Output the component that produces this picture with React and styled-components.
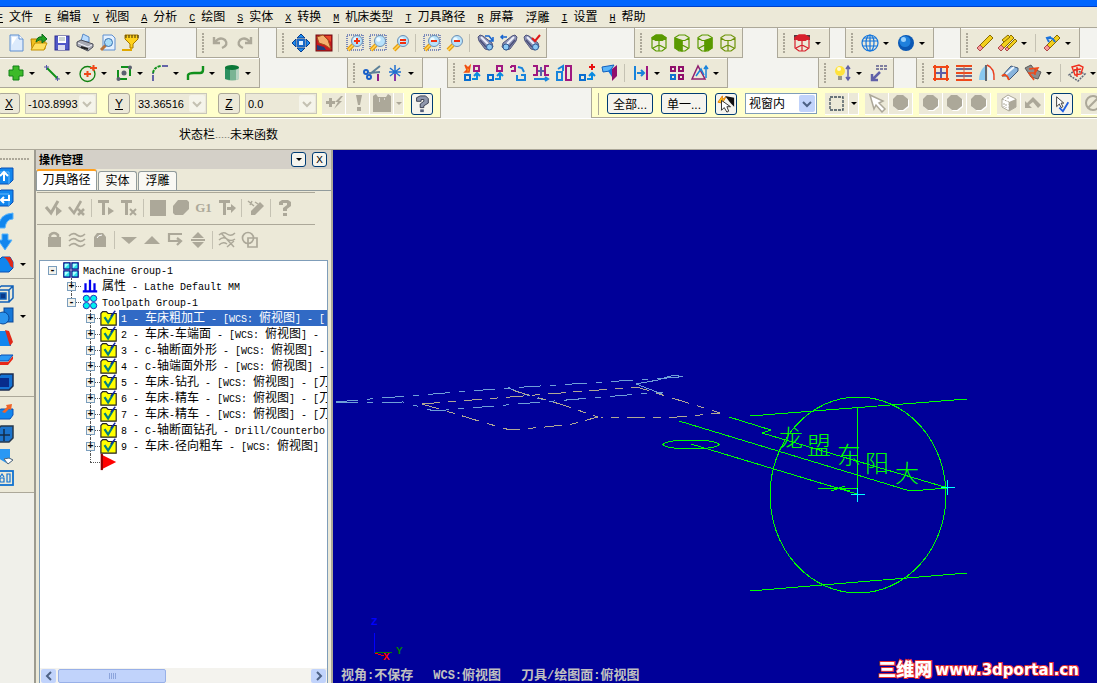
import styled, { createGlobalStyle, css } from "styled-components";

const GREY = "#aca899";

const cube = (color, face) => (
  <g fill="none" stroke={color} strokeWidth="1.2">
    {face && <path d={face} fill={color} />}
    <path d="M7 2H13L17 4.500V15L13 18H7L3 15V4.500zM3 5L7 7.500H13L17 5M10 7.500V18M4 15L10 12L16 15" />
  </g>
);

const lens = (inner, frame) => (
  <g>
    {frame && <rect x="2" y="2" width="16" height="15" fill="none" stroke="#0a2a9c" strokeDasharray="1 1" />}
    <path d="M8 12L3 17" stroke="#e8a012" strokeWidth="4" />
    <path d="M8 12L3 17" stroke="#ffd75a" strokeWidth="1.5" />
    <circle cx="12" cy="8" r="5.5" fill="#b8e2fb" stroke="#6c8fb4" />
    <circle cx="10.5" cy="6.5" r="2.2" fill="#eefaff" />
    <path d={inner} stroke="#f03010" strokeWidth="2" fill="none" />
  </g>
);

const spyglass = (extra) => (
  <g>
    <path d="M2 4L4 2L7 3L16 10L17 14L13 17L9 16L3 8z" fill="#8b91b5" stroke="#50557c" />
    <path d="M5 4L12 11" stroke="#eef0fb" strokeWidth="2" />
    <path d="M4 7L10 14" stroke="#4a4f78" strokeWidth="1.5" />
    <circle cx="13.5" cy="14" r="3" fill="#8cc8f4" stroke="#2e5a94" />
    {extra}
  </g>
);

const boxes = (extra) => (
  <g fill="none" strokeWidth="2">
    <rect x="3" y="12" width="5" height="5" stroke="#0a6ed0" />
    <path d="M10 16H15V11M12 13L15 10L18 13" stroke="#0a8ae0" />
    {extra}
  </g>
);

const polygonOff = (
  <g>
    <path d="M7 3H13L18 7V14L13 18H8L3 14V7z" fill="#fff" />
    <path d="M6 2H12L17 6V13L12 17H7L2 13V6z" fill={GREY} />
  </g>
);

const solid = (inner) => (
  <g>
    <path d="M2 6L6 2H18V14L14 18H2z" fill="#1186ee" stroke="#0a50b4" />
    <path d="M2 6H14V18" stroke="#64bafc" fill="none" />
    {inner}
  </g>
);

const eraser = (x = 0) => (
  <g transform={`translate(${x} 0)`}>
    <path d="M15 2L18 5L8 15L5 12z" fill="#f2cf1c" stroke="#8a6b00" />
    <path d="M5 12L8 15L5 18L2 15z" fill="#f59a9a" stroke="#b04848" />
  </g>
);

const icons = {
  fileNew: (
    <g>
      <path d="M4 2H13L17 6V18H4z" fill="#dceafc" stroke="#5f8fd0" />
      <path d="M13 2V6H17" fill="#fff" stroke="#5f8fd0" />
      <path d="M6 4H11L6 12z" fill="#fff" />
    </g>
  ),
  open: (
    <g>
      <path d="M2 6H8L10 8H16V16H3z" fill="#f0c020" stroke="#b88400" />
      <path d="M2 17L6 10H18L15 17z" fill="#ffe060" stroke="#c29000" />
      <path d="M7 9Q8 3 13 4V1L18 6L13 10V7Q10 6 7 9z" fill="#22a122" stroke="#0d6a1c" />
    </g>
  ),
  save: (
    <g>
      <rect x="3" y="3" width="14" height="14" fill="#5158c8" stroke="#2c2f90" />
      <rect x="6" y="3" width="8" height="7" fill="#fff" />
      <path d="M7 5H13M7 7H13" stroke="#9aa" />
      <rect x="6" y="12" width="7" height="5" fill="#dde" />
    </g>
  ),
  print: (
    <g>
      <path d="M6 8L8 1L14 4L14 9z" fill="#b9dcff" stroke="#5a88c4" />
      <path d="M2 9L6 7L18 11V14L13 18L2 13z" fill="#a9abb5" stroke="#4c4e5a" />
      <path d="M3 10L13 14L17 12" stroke="#f4f4fa" fill="none" />
      <path d="M6 14L13 16" stroke="#222" strokeWidth="2" />
    </g>
  ),
  preview: (
    <g>
      <path d="M5 2H14L17 5V17H5z" fill="#e4f0fd" stroke="#5f8fd0" />
      <path d="M8 12L3 17" stroke="#b8743c" strokeWidth="3" />
      <circle cx="10.5" cy="9.5" r="4" fill="#a8dcf8" stroke="#3870b0" />
    </g>
  ),
  funnel: (
    <g>
      <path d="M4 2H17V6L12 11V15H9V11L4 6z" fill="#ffd21c" stroke="#a67800" />
      <path d="M5 2V5M8 2V5M11 2V5M14 2V5M17 2V5" stroke="#3b2a00" />
      <path d="M10 15V17H1" stroke="#e0a800" strokeWidth="2" fill="none" />
    </g>
  ),
  undo: <path d="M3 4V10H9M4 9Q9 3 14 7Q18 12 11 15" stroke={GREY} strokeWidth="2.4" fill="none" />,
  redo: <path d="M17 4V10H11M16 9Q11 3 6 7Q2 12 9 15" stroke={GREY} strokeWidth="2.4" fill="none" />,
  fit: (
    <g fill="#1c8cf0" stroke="#0a3c8c">
      <path d="M10 1L14 5H6zM10 19L14 15H6zM1 10L5 6V14zM19 10L15 6V14z" />
      <rect x="7" y="7" width="6" height="6" fill="#dff1ff" stroke="#1668c8" strokeWidth="2" />
    </g>
  ),
  repaint: (
    <g>
      <rect x="2" y="2" width="16" height="16" fill="#c8181c" stroke="#701014" />
      <path d="M11 3H17V9z" fill="#e84828" />
      <path d="M3 12L10 14L12 17H3z" fill="#223a7c" />
      <path d="M3 4L9 2L14 7L17 16L11 12L5 10z" fill="#f4b070" stroke="#a0501c" />
    </g>
  ),
  zoomWindow: lens("M9 8H15M12 5V11", true),
  zoomTarget: lens("", true),
  zoomAll: lens("M9 7H15M9 10H15", false),
  zoomOutHalf: lens("M9 8H15", true),
  zoomOut: lens("M9 8H15", false),
  viewA: spyglass(<path d="M9 3H13L17 8M17 4V8H13" stroke="#1664d0" fill="none" strokeWidth="1.5" />),
  viewB: (
    <g>
      <path d="M18 4L16 2L13 3L4 10L3 14L7 17L11 16L17 8z" fill="#8b91b5" stroke="#50557c" />
      <path d="M15 4L8 11" stroke="#eef0fb" strokeWidth="2" />
      <path d="M16 7L10 14" stroke="#4a4f78" strokeWidth="1.5" />
      <circle cx="7" cy="14" r="3" fill="#8cc8f4" stroke="#2e5a94" />
      <path d="M2 4H8M4 2L2 4L4 6" stroke="#1664d0" fill="none" strokeWidth="1.5" />
    </g>
  ),
  viewC: spyglass(<path d="M10 5L13 8L18 2" stroke="#e01818" fill="none" strokeWidth="2" />),
  cubeTop: cube("#5a9a00", "M3 5L7 2H13L17 5L13 7.500H7z"),
  cubeFront: cube("#5a9a00", "M3 5L10 7.500V18L3 15z"),
  cubeSide: cube("#5a9a00", "M17 5L10 7.500V18L17 15z"),
  cubeIso: cube("#6d9308"),
  cubeRed: (
    <g>
      <rect x="2" y="2" width="16" height="5" fill="#4a4044" />
      {cube("#d8202c", "M3 5L7 2H13L17 5L13 7.500H7z")}
    </g>
  ),
  globe: (
    <g fill="none" stroke="#1274dc" strokeWidth="1.2">
      <circle cx="10" cy="10" r="8" />
      <ellipse cx="10" cy="10" rx="4" ry="8" />
      <path d="M2 8H18M3 13H17M10 2V18M4 5H16" />
    </g>
  ),
  sphere: (
    <g>
      <circle cx="10" cy="10" r="8" fill="#0b58b4" />
      <circle cx="9" cy="8.5" r="5.5" fill="#1f80dc" />
      <circle cx="7.5" cy="6.5" r="2.5" fill="#9bd2fc" />
    </g>
  ),
  eraser: eraser(),
  eraserMulti: (
    <g>
      {eraser(-2)}
      <path d="M17 6L19 8L11 16L9 14zM10 2L12 4L6 9L4 7z" fill="#f2cf1c" stroke="#8a6b00" />
      <path d="M9 14L11 16L9 18L7 16z" fill="#f59a9a" stroke="#b04848" />
    </g>
  ),
  unerase: (
    <g>
      {eraser()}
      <path d="M5 6Q10 3 13 9M7 9L5 5L9 4" stroke="#1c74dc" strokeWidth="2" fill="none" />
    </g>
  ),
  plus: <path d="M7 3H13V7H17V13H13V17H7V13H3V7H7z" fill="#3cba28" stroke="#128018" />,
  line: (
    <g stroke="#5858a8">
      <path d="M5 5L16 16" stroke="#109018" strokeWidth="2" />
      <path d="M2 4H7M4.500 2V7M13 16H18M15.500 13V18" />
    </g>
  ),
  circle: (
    <g fill="none">
      <circle cx="9.500" cy="11" r="7.500" stroke="#108010" strokeWidth="1.300" />
      <path d="M6 11H13M9.500 8V14M12 5H19M15.500 2V8" stroke="#f04818" strokeWidth="2" />
    </g>
  ),
  rect: (
    <g>
      <path d="M7 4H16V13M13 16H4V7" stroke="#10901c" strokeWidth="2" fill="none" />
      <circle cx="10" cy="10" r="2.500" fill="#5c6070" />
      <circle cx="4.500" cy="16" r="2" fill="#5c6070" />
      <circle cx="16" cy="4.500" r="2" fill="#5c6070" />
    </g>
  ),
  fillet: (
    <g fill="none" strokeWidth="2">
      <path d="M3 18V10M12 3H18" stroke="#6464a8" strokeDasharray="6 1" />
      <path d="M3 10Q4 4 11 3" stroke="#10901c" strokeDasharray="3 1" />
    </g>
  ),
  spline: <path d="M2 17V12Q3 10 8 10H14Q17 10 17 7V3" stroke="#10901c" strokeWidth="2.400" fill="none" />,
  cylinder: (
    <g>
      <path d="M3 4V16Q10 19 17 16V4z" fill="#7ab494" />
      <path d="M3 4H8V17L3 16z" fill="#2c9060" />
      <path d="M14 5V17L17 16V5z" fill="#b9d4c4" />
      <ellipse cx="10" cy="4.500" rx="7" ry="2.500" fill="#0c7838" />
    </g>
  ),
  trim: (
    <g fill="none" strokeWidth="2">
      <path d="M18 3L8 11M18 9L7 10" stroke="#5c8098" />
      <circle cx="4" cy="9" r="2" stroke="#1860c8" />
      <circle cx="7" cy="14" r="2" stroke="#1860c8" />
      <path d="M16 11V18" stroke="#902088" />
    </g>
  ),
  breakPoint: (
    <g strokeWidth="1.500">
      <path d="M10 2V11M5 5L15 13M15 5L5 13M4 9H16" stroke="#2070d0" />
      <path d="M10 11V18" stroke="#8838a8" strokeWidth="2" />
    </g>
  ),
  move: boxes(
    <g>
      <path d="M12 3H17V8H12z" stroke="#a01880" />
      <path d="M3 2L6 5L8 3L7 9H3L5 7z" fill="#ffb020" stroke="#f05010" strokeWidth="1.500" />
    </g>
  ),
  move3d: boxes(<path d="M12 3H17V8H12z" stroke="#a01880" />),
  mirrorBox: (
    <g fill="none" strokeWidth="2">
      <path d="M3 3H7V8H3M3 3V5" stroke="#a01880" />
      <path d="M10 4L14 5L16 9M9 12V17H17V12H13" stroke="#1884dc" />
    </g>
  ),
  mirror: (
    <g fill="none" strokeWidth="2">
      <path d="M2 3H6V12H2M18 3H14V12H18" stroke="#a01880" />
      <path d="M10 4V13M7 8H13" stroke="#5c60a8" />
      <path d="M3 16H17M14 14L17 16L14 18" stroke="#1884dc" />
    </g>
  ),
  scale: (
    <g fill="none" strokeWidth="2">
      <path d="M3 9H8V17H3zM4 6L9 3V8" stroke="#1884dc" />
      <path d="M12 3H17V17H12z" stroke="#a01880" />
    </g>
  ),
  offset: boxes(<path d="M12 4H18M15 1V7" stroke="#e81010" />),
  project: (
    <g>
      <path d="M2 4L14 2L10 8L3 9z" fill="#5ab4f8" stroke="#1060c0" />
      <path d="M8 8L12 5V14z" fill="#1874d8" />
      <path d="M12 6L17 2V13L12 18z" fill="#90106c" />
    </g>
  ),
  stretch: (
    <g fill="none" strokeWidth="2">
      <path d="M4 3V17" stroke="#1884dc" />
      <path d="M16 3V17" stroke="#a01880" />
      <path d="M6 10H13M10 7L13 10L10 13" stroke="#1884dc" />
    </g>
  ),
  array: (
    <g fill="none" strokeWidth="2" stroke="#90106c">
      <path d="M4 4H8V8H4zM12 4H16V8H12zM12 12H16V16H12z" />
      <path d="M4 12H8V16H4z" stroke="#1070d0" />
    </g>
  ),
  drag: (
    <g fill="none" strokeWidth="1.500">
      <path d="M2 16L8 3L15 16z" stroke="#902070" />
      <path d="M6 13L11 6L14 12M16 15V4M14 6L16 3L18 6" stroke="#1884dc" />
    </g>
  ),
  bulb: (
    <g>
      <circle cx="7" cy="8" r="5" fill="#ffe23c" />
      <circle cx="6" cy="6" r="2" fill="#fffbd0" />
      <path d="M5 13H9V17H5z" fill="#98978a" />
      <path d="M15 4V16M13 6L15 3L17 6M13 14L15 17L17 14" stroke="#6060a8" strokeWidth="1.500" fill="none" />
    </g>
  ),
  note: (
    <g fill="none" stroke="#5c5c8c">
      <path d="M7 3H18M7 6H18" strokeDasharray="3 1" strokeWidth="1.500" />
      <path d="M11 9L4 16M3 11V17H9" stroke="#6060a8" strokeWidth="2.500" />
    </g>
  ),
  gridRed: (
    <g fill="none" strokeWidth="2">
      <path d="M2 4H18M2 16H18M4 2V18M16 2V18" stroke="#f04818" />
      <path d="M10 5V15M5 10H15" stroke="#5c60a8" />
    </g>
  ),
  lines: (
    <g strokeWidth="2">
      <path d="M2 3H18M2 10H18M2 17H18" stroke="#f04818" />
      <path d="M2 6H18M2 13H18" stroke="#6a6e94" />
      <path d="M10 3V17" stroke="#c86048" strokeWidth="1" />
    </g>
  ),
  revolve: (
    <g>
      <path d="M8 3Q2 8 2 17H8z" fill="#88c8f0" />
      <path d="M9 2V18" stroke="#303c50" strokeWidth="1.500" />
      <path d="M11 3Q18 6 17 17H11z" fill="#e4f2fa" />
      <path d="M10 2Q18 5 17 17" fill="none" stroke="#e84020" strokeWidth="1.500" />
    </g>
  ),
  sweep: (
    <g>
      <path d="M2 13L11 3L18 5V8L9 17L7 13z" fill="#88b4dc" stroke="#405878" />
      <path d="M2 13Q6 9 9 17" stroke="#f04818" strokeWidth="2" fill="none" />
      <path d="M6 11L14 4" stroke="#eef7ff" strokeWidth="2" />
    </g>
  ),
  net: (
    <g fill="none">
      <path d="M2 5L8 2L11 6L18 9L15 16L8 14z" fill="#8c8c8c" stroke="#5a5a5a" />
      <path d="M6 6L15 5L12 10L6 10L11 17M12 5V12" stroke="#f04818" strokeWidth="1.500" />
    </g>
  ),
  patch: (
    <g fill="none">
      <path d="M2 12L8 7L18 11L11 18z" stroke="#606878" strokeDasharray="2 1" strokeWidth="1.500" />
      <path d="M5 4L12 2L16 4L14 11L8 12zM7 7L14 6M10 4V14" stroke="#f02c1c" strokeWidth="1.400" />
    </g>
  ),
  fastPoint: <path d="M2 8H5V5H8V8H11V11H8V14H5V11H2zM17 3L11 9H14L10 16L18 8H15L19 3z" fill={GREY} />,
  bang: (
    <g>
      <path d="M8 2H14L12 12H10z" fill={GREY} />
      <rect x="9" y="14" width="4" height="4" fill={GREY} />
    </g>
  ),
  block: (
    <g>
      <path d="M1 3L4 1L6 4H14L16 1L19 3V19H1z" fill={GREY} />
      <path d="M7 6H8M12 6H13M7 8H8" stroke="#fff" />
    </g>
  ),
  help: (
    <g>
      <path d="M4 7V3L8 1H14L17 4V9L12 12V14H8V10L12 7V5H9V7z" fill="#8f97ac" stroke="#30374a" />
      <rect x="8" y="16" width="4" height="3" fill="#55607c" />
    </g>
  ),
  cursorFlash: (
    <g>
      <path d="M1 8L6 1L6 5L10 2L6 9z" fill="#ffc41c" stroke="#e07a00" />
      <path d="M9 1L19 3V13L15 9z" fill="#111" />
      <path d="M5 6V17L8 14L11 19L13 18L11 13H15z" fill="#fff" stroke="#222" />
    </g>
  ),
  marquee: <rect x="3" y="4" width="13" height="13" fill="none" stroke="#3c4c58" strokeWidth="1.300" strokeDasharray="3 1" />,
  cursorOff: <path d="M3 2L16 8L12 10L18 16L15 19L9 12L7 16z" fill="#fff" stroke={GREY} strokeWidth="1.500" />,
  polyOff: polygonOff,
  cubeOff: (
    <g>
      <path d="M3 6L9 2L17 6V14L10 18L3 14z" fill="#fff" stroke={GREY} />
      <path d="M10 9L17 6V14L10 18z" fill={GREY} />
      <path d="M3 6L10 9V18M5 10V14M7 11V15M9 4V6" stroke={GREY} fill="none" strokeDasharray="2 1" />
    </g>
  ),
  back: <path d="M2 15V8L4 10L10 4L18 12L15 15L10 9L6 12L9 15z" fill={GREY} />,
  cursorCheck: (
    <g fill="none">
      <path d="M4 2V13L7 10L9 14L11 13L9 9H12z" fill="#fff" stroke="#333" />
      <path d="M7 14L11 18L17 8" stroke="#2060e0" strokeWidth="2" />
    </g>
  ),
  forbid: (
    <g stroke={GREY} strokeWidth="2" fill="none">
      <circle cx="10" cy="10" r="7" />
      <path d="M5 15L15 5" />
    </g>
  ),
  selectAllOps: (
    <g>
      <path d="M2 9L7 15L14 3" stroke={GREY} strokeWidth="3" fill="none" />
      <path d="M12 8L18 13L12 18z" fill={GREY} />
    </g>
  ),
  deselectOps: <path d="M2 9L7 15L14 3M11 11L17 17M17 11L11 17" stroke={GREY} strokeWidth="2.500" fill="none" />,
  regenOps: (
    <g fill={GREY}>
      <path d="M2 2H13V5H9V17H6V5H2z" />
      <path d="M12 9L18 13L12 17z" />
    </g>
  ),
  regenDirty: (
    <g fill={GREY}>
      <path d="M2 2H13V5H9V17H6V5H2z" />
      <path d="M11 11L17 17M17 11L11 17" stroke={GREY} strokeWidth="2" />
    </g>
  ),
  square: <path d="M2 2H18V18H2z" fill={GREY} />,
  verify: <path d="M7 2H16L18 4V11L12 17H4L2 15V8z" fill={GREY} />,
  highfeed: (
    <g fill={GREY}>
      <path d="M2 2H13V5H9V17H6V5H2zM10 9H14V6L19 10L14 15V12H10z" />
    </g>
  ),
  tag: (
    <g fill={GREY}>
      <path d="M14 4L18 8L9 17H5V13z" />
      <path d="M2 3L8 8M6 3L4 7M9 4L12 6" stroke={GREY} strokeWidth="1.500" />
    </g>
  ),
  helpOff: (
    <g fill={GREY}>
      <path d="M4 7V4L7 2H13L16 4V8L12 11V13H8V10L12 7V5H8V7z" />
      <rect x="8" y="15" width="4" height="3" />
    </g>
  ),
  lock: (
    <g>
      <path d="M6 9V5Q10 1 14 5V9" stroke={GREY} strokeWidth="2.500" fill="none" />
      <rect x="4" y="7" width="13" height="10" fill={GREY} />
    </g>
  ),
  waves: <path d="M2 6Q6 2 10 5T18 4M2 11Q6 7 10 10T18 9M2 16Q6 12 10 15T18 14" stroke={GREY} strokeWidth="1.700" fill="none" />,
  lockAlt: (
    <g>
      <path d="M4 17V7L7 3H13L16 7V17z" fill={GREY} />
      <path d="M7 8Q8 5 12 5" stroke="#fff" fill="none" />
    </g>
  ),
  down: <path d="M2 7H18L10 14z" fill={GREY} />,
  up: <path d="M2 14H18L10 6z" fill={GREY} />,
  insert: <path d="M17 4H4V11H15M12 8L16 11L12 15" stroke={GREY} strokeWidth="2.200" fill="none" />,
  scroll: <path d="M10 2L16 8H4zM3 9H17V11H3zM10 18L16 12H4z" fill={GREY} />,
  wavesX: <path d="M2 5Q6 1 10 4T18 3M2 10Q6 6 10 9T18 9M2 15Q6 11 10 14M4 3L17 17M17 11L10 17" stroke={GREY} strokeWidth="1.500" fill="none" />,
  overlap: (
    <g stroke={GREY} strokeWidth="1.700" fill="none">
      <circle cx="8" cy="8" r="5.500" />
      <path d="M8 8H17V17H8z" />
    </g>
  ),
  extrude: solid(<path d="M9 15V7M5 10L9 6L13 10" stroke="#fff" strokeWidth="2" fill="none" />),
  revolveSolid: solid(<path d="M14 7V12H6M9 9L6 12L9 15" stroke="#fff" strokeWidth="2" fill="none" />),
  sweepSolid: <path d="M18 3V9Q11 9 10 18H4Q3 4 18 3z" fill="#1186ee" stroke="#58b4fc" />,
  loft: <path d="M7 2H13V8H17L10 18L3 8H7z" fill="#1186ee" stroke="#58b4fc" />,
  filletSolid: (
    <g>
      <path d="M2 8L7 3H15L18 8V14L14 18H2z" fill="#1186ee" stroke="#0a50b4" />
      <path d="M9 3H15L18 8V14L15 12Q14 7 9 3z" fill="#e02818" />
    </g>
  ),
  shell: (
    <g fill="none" stroke="#1060b8" strokeWidth="1.500">
      <path d="M2 6H14V18H2zM6 2H18V14L14 18M14 6L18 2M2 6L6 2" />
      <rect x="5" y="9" width="6" height="6" fill="#0a3888" />
    </g>
  ),
  boolean: (
    <g fill="#1678d8" stroke="#0a4898">
      <rect x="9" y="2" width="9" height="14" />
      <circle cx="8" cy="12" r="6" fill="#2a94ee" />
    </g>
  ),
  trimSolid: (
    <g>
      <path d="M3 3H11L16 14V18H2z" fill="#1186ee" />
      <path d="M10 2L14 3L18 14L15 18z" fill="#e02818" />
    </g>
  ),
  draft: (
    <g>
      <path d="M6 5H18L13 11H1z" fill="#2a98f4" stroke="#0a50b4" />
      <path d="M1 12H13L18 6V9L13 15H1z" fill="#e82818" />
    </g>
  ),
  thicken: (
    <g>
      <path d="M2 6L6 2H18V14L14 18H2z" fill="#1472d4" stroke="#1c2c50" strokeWidth="1.500" />
      <rect x="4" y="6" width="10" height="9" fill="#082c8c" />
    </g>
  ),
  removeFace: (
    <g>
      <path d="M2 9L6 7H18V13L15 17H2z" fill="#1186ee" stroke="#0a50b4" />
      <path d="M7 10L12 5L11 3L17 2L16 8L14 7L10 11z" fill="#f06428" />
    </g>
  ),
  feature: (
    <g>
      <path d="M2 6L6 2H18V14L14 18H2z" fill="#1c74cc" stroke="#26384c" strokeWidth="1.500" />
      <path d="M9 5V17M3 11H15" stroke="#142c48" strokeWidth="1.500" />
    </g>
  ),
  history: (
    <g>
      <path d="M4 3H15V12L18 14L13 18L3 12z" fill="#2a98f4" />
      <path d="M9 13L14 12L18 14L13 18z" fill="#fff" stroke="#567" />
    </g>
  ),
  layout: (
    <g fill="none" stroke="#1072d0" strokeWidth="1.800">
      <rect x="2" y="3" width="16" height="14" />
      <path d="M12 6H15V14H12zM5 10H9V14H5zM5 9L7 6L9 9" strokeWidth="1.200" />
    </g>
  ),
  groupSquares: (
    <g>
      <path d="M2 2H9V9H2zM11 2H18V9H11zM2 11H9V18H2zM11 11H18V18H11z" fill="#2ce0e8" stroke="#000080" strokeWidth="1.300" />
      <path d="M3 3H8L3 8zM12 3H17L12 8zM3 12H8L3 17zM12 12H17L12 17z" fill="#b0ffff" />
    </g>
  ),
  props: <path d="M5 7V16M10 3V16M15 7V16M2 16H18" stroke="#0000f0" strokeWidth="2.500" />,
  groupCircles: (
    <g fill="#00f0f0" stroke="#2020b0">
      <circle cx="6" cy="6" r="3.500" />
      <circle cx="14" cy="6" r="3.500" />
      <circle cx="6" cy="14" r="3.500" />
      <circle cx="14" cy="14" r="3.500" />
    </g>
  ),
  operation: (
    <g>
      <path d="M1 5L3 3H7L9 5H18V18H1z" fill="#ffff00" stroke="#222" strokeWidth="1.300" />
      <path d="M5 9L9 15L15 5" stroke="#008080" strokeWidth="2.500" fill="none" />
      <path d="M12 8L17 2" stroke="#1020a0" strokeWidth="1.500" />
    </g>
  ),
  insertArrow: (
    <g>
      <path d="M2 2L18 10L2 18z" fill="#ff0000" />
      <path d="M2 1V19" stroke="#900000" strokeWidth="2.500" />
    </g>
  ),
};

const Icon = ({ name, size = 20 }) => (
  <svg width={size} height={size} viewBox="0 0 20 20" aria-hidden="true">
    {icons[name]}
  </svg>
);

const Mixed = ({ text, latin = 10 }) =>
  text
    .split(/([\x20-\x7e]+)/)
    .filter(Boolean)
    .map((part, i) =>
      /[\x20-\x7e]/.test(part) ? (
        <Latin key={i} $size={latin}>
          {part}
        </Latin>
      ) : (
        part
      )
    );

const Tool = ({ name }) => (
  <ToolButton type="button" aria-label={name}>
    <Icon name={name} />
  </ToolButton>
);

// "|" is a separator, a trailing "+" adds a drop-down arrow
const Tools = ({ items }) =>
  items.map((item, i) => {
    if (item === "|") return <Separator key={i} />;
    if (item === "G1") return <CodeButton key={i} type="button">G1</CodeButton>;
    if (item.endsWith("+")) {
      return (
        <Split key={i}>
          <Tool name={item.slice(0, -1)} />
          <DropButton type="button" aria-label="more">
            <Triangle />
          </DropButton>
        </Split>
      );
    }
    return <Tool key={i} name={item} />;
  });

const menus = [
  ["F", "文件"],
  ["E", "编辑"],
  ["V", "视图"],
  ["A", "分析"],
  ["C", "绘图"],
  ["S", "实体"],
  ["X", "转换"],
  ["M", "机床类型"],
  ["T", "刀具路径"],
  ["R", "屏幕"],
  ["", "浮雕"],
  ["I", "设置"],
  ["H", "帮助"],
];

const firstRow = [
  { items: ["fileNew", "open", "save", "print", "preview", "funnel"], noGrip: true, after: 52 },
  { items: ["undo", "redo"], after: 19 },
  {
    items: ["fit", "repaint", "|", "zoomWindow", "zoomTarget", "zoomAll", "|", "zoomOutHalf", "zoomOut", "|", "viewA", "viewB", "viewC"],
    after: 89,
  },
  { items: ["cubeTop", "cubeFront", "cubeSide", "cubeIso"], after: 36 },
  { items: ["cubeRed+"], after: 17 },
  { items: ["globe+", "sphere+"], after: 28 },
  { items: ["eraser", "eraserMulti+", "|", "unerase+"], after: 0 },
];

const secondRow = [
  { items: ["plus+", "line+", "circle+", "rect+", "fillet+", "spline+", "cylinder+"], noGrip: true, after: 89 },
  { items: ["trim", "breakPoint+"], after: 26 },
  {
    items: ["move", "move3d", "mirrorBox", "mirror", "scale", "offset", "project", "|", "stretch+", "array", "drag+"],
    after: 92,
  },
  { items: ["bulb+", "note"], after: 24 },
  { items: ["gridRed", "lines", "revolve", "sweep", "net+", "|", "patch+"], after: 0 },
];

const coords = [
  ["X", "-103.8993"],
  ["Y", "33.36516"],
  ["Z", "0.0"],
];

const sideTools = [
  ["extrude", "revolveSolid", "sweepSolid", "loft", "filletSolid+"],
  ["shell", "boolean+", "trimSolid", "draft", "thicken"],
  ["removeFace", "feature", "history", "layout"],
];

const tree = [
  { level: 0, icon: "groupSquares", text: "Machine Group-1", sign: "-" },
  { level: 1, icon: "props", text: "属性 - Lathe Default MM", sign: "+" },
  { level: 1, icon: "groupCircles", text: "Toolpath Group-1", sign: "-", last: true },
  { level: 2, icon: "operation", text: "1 - 车床粗加工 - [WCS: 俯视图] - [", sign: "+", selected: true },
  { level: 2, icon: "operation", text: "2 - 车床-车端面 - [WCS: 俯视图] -", sign: "+" },
  { level: 2, icon: "operation", text: "3 - C-轴断面外形 - [WCS: 俯视图] -", sign: "+" },
  { level: 2, icon: "operation", text: "4 - C-轴端面外形 - [WCS: 俯视图] -", sign: "+" },
  { level: 2, icon: "operation", text: "5 - 车床-钻孔 - [WCS: 俯视图] - [刀", sign: "+" },
  { level: 2, icon: "operation", text: "6 - 车床-精车 - [WCS: 俯视图] - [刀", sign: "+" },
  { level: 2, icon: "operation", text: "7 - 车床-精车 - [WCS: 俯视图] - [刀", sign: "+" },
  { level: 2, icon: "operation", text: "8 - C-轴断面钻孔 - Drill/Counterbo", sign: "+" },
  { level: 2, icon: "operation", text: "9 - 车床-径向粗车 - [WCS: 俯视图]", sign: "+" },
  { level: 2, icon: "insertArrow", text: "", sign: "", last: true },
];

const ToolbarRow = ({ groups }) => (
  <Row>
    {groups.map(({ items, noGrip, after }, i) => (
      <GroupSlot key={i} $after={after}>
        <Group $noGrip={noGrip}>
          {!noGrip && <Grip />}
          <Tools items={items} />
        </Group>
      </GroupSlot>
    ))}
  </Row>
);

const engraved = [
  ["龙", 791, 447],
  ["盟", 819, 454],
  ["东", 849, 464],
  ["阳", 877, 472],
  ["大", 907, 482],
];

const Drawing = () => (
  <DrawingSvg viewBox="333 150 764 533" preserveAspectRatio="xMidYMid meet">
    <g fill="none" strokeWidth="1" shapeRendering="crispEdges">
      <g stroke="#6f9fd8" strokeDasharray="22 9 6 9">
        <path d="M336 402L370 399L508 388L683 377" />
        <path d="M336 403L403 402L434 411L663 392" />
        <path d="M508 388L530 396L552 402" />
        <path d="M683 377L674 375L658 380L636 384L662 394" strokeDasharray="none" />
      </g>
      <g stroke="#b0a894" strokeDasharray="18 8 8 8">
        <path d="M422 404L510 397L637 387L720 413L690 416L665 418L600 417" />
        <path d="M422 404L456 414L482 422L510 430L545 427L572 424L598 417L560 404L508 389" />
      </g>
      <g stroke="#00ff00">
        <ellipse cx="858" cy="495" rx="88" ry="98" />
        <ellipse cx="691" cy="444.500" rx="28" ry="4.500" />
        <path d="M750 416L967 399M750 591L967 573" />
        <path d="M857.500 408V488" />
        <path d="M679 421L910 491L948 488" />
        <path d="M729 417L771 430L762 433L948 488" />
        <path d="M691 444L857 494" />
        <path d="M818 488H857M831 491L845 486M834 487L850 491" />
      </g>
      <path d="M857.500 488V502M851 494.500H865M947.500 480V495M941 487.500H955" stroke="#00ffff" />
      <path d="M374.500 633V653" stroke="#0000ff" />
      <path d="M375 652.500H392" stroke="#008000" />
      <path d="M375 653L384 656" stroke="#ff0000" />
    </g>
    {engraved.map(([char, x, y]) => (
      <Engraved key={char} x={x} y={y}>
        {char}
      </Engraved>
    ))}
    <AxisLabel x="371" y="625" fill="#0000ff">Z</AxisLabel>
    <AxisLabel x="383" y="660" fill="#ff0000">X</AxisLabel>
    <AxisLabel x="396" y="654" fill="#008000">Y</AxisLabel>
  </DrawingSvg>
);

const App = () => (
  <Window>
    <GlobalStyle />
    <TitleStrip />
    <MenuBar>
      {menus.map(([key, label]) => (
        <MenuItem key={label} type="button">
          {key && (
            <>
              <Mnemonic>{key}</Mnemonic>
              <Latin $size={10}> </Latin>
            </>
          )}
          {label}
        </MenuItem>
      ))}
    </MenuBar>
    <ToolbarRow groups={firstRow} />
    <ToolbarRow groups={secondRow} />
    <Row>
      <CoordGroup>
        {coords.map(([axis, value]) => (
          <Coord key={axis}>
            <AxisButton type="button">{axis}</AxisButton>
            <Combo>
              <ComboInput aria-label={axis} defaultValue={value} />
              <Chevron $off>
                <ChevronIcon color="#c4c1b2" />
              </Chevron>
            </Combo>
          </Coord>
        ))}
        <FlatButton type="button" aria-label="fastPoint"><Icon name="fastPoint" /></FlatButton>
        <FlatButton type="button" aria-label="bang"><Icon name="bang" /></FlatButton>
        <FlatButton type="button" aria-label="block"><Icon name="block" /></FlatButton>
        <NarrowButton type="button" aria-label="more"><Triangle $off /></NarrowButton>
        <FramedButton type="button" aria-label="help"><Icon name="help" size={18} /></FramedButton>
      </CoordGroup>
      <SelectGroup>
        <Bar />
        <TextButton type="button">全部...</TextButton>
        <TextButton type="button">单一...</TextButton>
        <FramedButton type="button" aria-label="cursor"><Icon name="cursorFlash" size={18} /></FramedButton>
        <SelectBox>
          <Select aria-label="window" defaultValue="视窗内">
            <option>视窗内</option>
          </Select>
          <Chevron>
            <ChevronIcon color="#4d6185" />
          </Chevron>
        </SelectBox>
        <Filters>
          <ButtonSet>
            <FlatButton type="button" aria-label="marquee"><Icon name="marquee" /></FlatButton>
            <NarrowButton type="button" aria-label="more"><Triangle /></NarrowButton>
          </ButtonSet>
          <ButtonSet>
            <FlatButton type="button" aria-label="cursorOff"><Icon name="cursorOff" /></FlatButton>
            <FlatButton type="button" aria-label="face"><Icon name="polyOff" /></FlatButton>
          </ButtonSet>
          <ButtonSet>
            <FlatButton type="button" aria-label="edge"><Icon name="polyOff" /></FlatButton>
            <FlatButton type="button" aria-label="body"><Icon name="polyOff" /></FlatButton>
            <FlatButton type="button" aria-label="part"><Icon name="polyOff" /></FlatButton>
          </ButtonSet>
          <ButtonSet>
            <FlatButton type="button" aria-label="cubeOff"><Icon name="cubeOff" /></FlatButton>
            <FlatButton type="button" aria-label="back"><Icon name="back" /></FlatButton>
          </ButtonSet>
          <FramedButton type="button" aria-label="check"><Icon name="cursorCheck" size={18} /></FramedButton>
        </Filters>
        <FlatButton type="button" aria-label="forbid"><Icon name="forbid" /></FlatButton>
      </SelectGroup>
    </Row>
    <StatusBar>
      <Mixed text="状态栏-----未来函数" latin={5} />
    </StatusBar>
    <Main>
      <SideBar>
        <SideGrip />
        {sideTools.map((items, i) => (
          <SideGroup key={i}>
            {items.map((item) => (
              <SideItem key={item}>
                <Tools items={[item]} />
              </SideItem>
            ))}
          </SideGroup>
        ))}
      </SideBar>
      <Panel>
        <PanelHeader>
          <PanelTitle>操作管理</PanelTitle>
          <HeaderButton type="button" aria-label="menu"><Triangle /></HeaderButton>
          <HeaderButton type="button">X</HeaderButton>
        </PanelHeader>
        <Tabs>
          <Tab type="button" $active>刀具路径</Tab>
          <Tab type="button">实体</Tab>
          <Tab type="button">浮雕</Tab>
        </Tabs>
        <PanelTools>
          <Tools
            items={["selectAllOps", "deselectOps", "|", "regenOps", "regenDirty", "|", "square", "verify", "G1", "highfeed", "|", "tag", "|", "helpOff"]}
          />
        </PanelTools>
        <PanelTools>
          <Tools
            items={["lock", "waves", "lockAlt", "|", "down", "up", "insert", "scroll", "|", "wavesX", "overlap"]}
          />
        </PanelTools>
        <TreeBox>
          <TreeList>
            {tree.map((row, i) => (
              <TreeRow key={i} $level={row.level}>
                <Branch $line={row.level > 0} $last={row.last}>
                  {row.sign && <Expander>{row.sign}</Expander>}
                </Branch>
                <Icon name={row.icon} size={18} />
                {row.text && (
                  <TreeText $selected={row.selected}>
                    <Mixed text={row.text} />
                  </TreeText>
                )}
              </TreeRow>
            ))}
          </TreeList>
          <ScrollBar>
            <ScrollButton type="button" aria-label="left">
              <ChevronIcon color="#4d6185" turn={90} />
            </ScrollButton>
            <ScrollThumb>
              <i />
              <i />
              <i />
              <i />
            </ScrollThumb>
            <ScrollTrack />
            <ScrollButton type="button" aria-label="right">
              <ChevronIcon color="#4d6185" turn={-90} />
            </ScrollButton>
          </ScrollBar>
        </TreeBox>
      </Panel>
      <Canvas>
        <Drawing />
        <CanvasStatus>
          <span><Mixed text="视角:不保存" latin={12} /></span>
          <span><Mixed text="WCS:俯视图" latin={12} /></span>
          <span><Mixed text="刀具/绘图面:俯视图" latin={12} /></span>
        </CanvasStatus>
        <Watermark>
          <strong>三维网</strong>
          <span>www.3dportal.cn</span>
        </Watermark>
      </Canvas>
    </Main>
  </Window>
);

const ChevronIcon = ({ color, turn = 0 }) => (
  <svg width="10" height="10" viewBox="0 0 10 10" aria-hidden="true">
    <path d="M1 3L5 7L9 3" fill="none" stroke={color} strokeWidth="2" transform={`rotate(${turn} 5 5)`} />
  </svg>
);

const GlobalStyle = createGlobalStyle`
  * {
    box-sizing: border-box;
  }

  body {
    margin: 0;
    overflow: hidden;
    font-family: "Liberation Sans", "Noto Sans CJK SC", sans-serif;
    font-size: 12px;
    color: #000;
  }

  button, input, select {
    font: inherit;
    color: inherit;
    margin: 0;
    padding: 0;
    border: none;
    background: none;
  }

  svg {
    display: block;
    flex-shrink: 0;
  }
`;

const Window = styled.div`
  height: 100vh;
  display: flex;
  flex-direction: column;
  background-color: #ece9d8;
  overflow: hidden;
`;

const TitleStrip = styled.div`
  flex-shrink: 0;
  height: 7px;
  background-color: #0066ff;
  border-bottom: 1px solid #0040c8;
`;

const MenuBar = styled.nav`
  flex-shrink: 0;
  height: 21px;
  display: flex;
  align-items: center;
  gap: 12px;
  margin-left: -3px;
  padding-top: 2px;
  border-bottom: 1px solid #aca899;
`;

const MenuItem = styled.button`
  white-space: pre;
  line-height: 18px;
`;

const Latin = styled.span`
  font-family: "Liberation Mono", monospace;
  font-size: ${({ $size }) => $size}px;
`;

const Mnemonic = styled.span`
  font-family: "Liberation Mono", monospace;
  font-size: 10px;
  text-decoration: underline;
`;

const Row = styled.div`
  flex-shrink: 0;
  height: 30px;
  display: flex;
  background-color: #f3f3ef;
  overflow: hidden;
`;

const GroupSlot = styled.div`
  flex-shrink: 0;
  display: flex;
  padding-right: ${({ $after }) => $after}px;
`;

const Group = styled.div`
  display: flex;
  align-items: center;
  padding: 0 3px 0 ${({ $noGrip }) => ($noGrip ? 4 : 0)}px;
  background-color: #ece9d8;
  border-top: 1px solid #fff;
  border-bottom: 1px solid #aca899;
  box-shadow: 1px 0 0 #aca899, -1px 0 0 #aca899;
`;

const Grip = styled.div`
  width: 12px;
  height: 20px;
  background: repeating-linear-gradient(#aca899 0 2px, transparent 2px 3px) 5px 0 / 2px 100% no-repeat;
`;

const ToolButton = styled.button`
  flex-shrink: 0;
  width: 23px;
  height: 22px;
  display: flex;
  align-items: center;
  justify-content: center;
`;

const CodeButton = styled(ToolButton)`
  font-family: "Liberation Serif", serif;
  font-size: 13px;
  font-weight: 700;
  color: ${GREY};
`;

const Split = styled.div`
  display: flex;
`;

const DropButton = styled.button`
  width: 13px;
  padding-left: 2px;
  display: flex;
  align-items: center;
`;

const Triangle = styled.span`
  display: block;
  border: 3px solid transparent;
  border-top-color: ${({ $off }) => ($off ? GREY : "#000")};
  border-bottom-width: 0;
`;

const Separator = styled.div`
  flex-shrink: 0;
  width: 8px;
  height: 18px;
  background: linear-gradient(#c5c2b3, #c5c2b3) 3px 0 / 1px 100% no-repeat;
`;

const CoordGroup = styled.div`
  flex-shrink: 0;
  display: flex;
  align-items: center;
  margin-left: -2px;
  padding: 2px 7px 0 0;
  background-color: #ffffcc;
  border-bottom: 1px solid #aca899;
  border-right: 1px solid #aca899;
`;

const Coord = styled.div`
  display: flex;
  align-items: center;
  gap: 5px;
  width: 110px;

  &:nth-child(3) {
    width: 104px;
  }
`;

const AxisButton = styled.button`
  width: 22px;
  height: 21px;
  border: 1px solid #aca899;
  border-radius: 3px;
  background-color: #ece9d8;
  text-decoration: underline;
`;

const Combo = styled.div`
  width: 72px;
  height: 21px;
  display: flex;
  align-items: center;
  border: 1px solid #c9c7ba;
  background-color: #ece9d8;
`;

const ComboInput = styled.input`
  flex: 1;
  min-width: 0;
  padding-left: 2px;
  font-size: 11px;
`;

const Chevron = styled.span`
  flex-shrink: 0;
  width: 16px;
  height: 17px;
  margin-right: 1px;
  display: flex;
  align-items: center;
  justify-content: center;
  border-radius: 2px;
  background-color: ${({ $off }) => ($off ? "#f5f4ea" : "#c1d3fb")};
  pointer-events: none;
`;

const FlatButton = styled.button`
  flex-shrink: 0;
  width: 24px;
  height: 22px;
  display: flex;
  align-items: center;
  justify-content: center;
  background-color: #ece9d8;
  border-right: 1px solid #fff;
  border-bottom: 1px solid #fff;
`;

const NarrowButton = styled(FlatButton)`
  width: 10px;
`;

const framed = css`
  border: 1px solid #003c74;
  border-radius: 3px;
  background-color: #f5f4ee;
`;

const FramedButton = styled.button`
  flex-shrink: 0;
  width: 22px;
  height: 22px;
  display: flex;
  align-items: center;
  justify-content: center;
  ${framed}

  ${CoordGroup} & {
    margin-left: 7px;
  }
`;

const SelectGroup = styled.div`
  flex: 1;
  min-width: 505px;
  margin-left: 150px;
  display: flex;
  align-items: center;
  gap: 8px;
  padding: 2px 0 0 5px;
  background-color: #ffffcc;
  border-bottom: 1px solid #aca899;
  border-left: 1px solid #aca899;
`;

const Bar = styled.div`
  flex-shrink: 0;
  width: 2px;
  height: 22px;
  border-right: 1px solid #aca899;
`;

const TextButton = styled.button`
  flex-shrink: 0;
  width: 46px;
  height: 21px;
  ${framed}
`;

const SelectBox = styled.div`
  flex-shrink: 0;
  position: relative;
  width: 72px;
  height: 21px;

  ${Chevron} {
    position: absolute;
    top: 2px;
    right: 1px;
  }
`;

const Select = styled.select`
  width: 100%;
  height: 100%;
  padding-left: 3px;
  appearance: none;
  border: 1px solid #7f9db9;
  background-color: #fff;
`;

const Filters = styled.div`
  flex-shrink: 0;
  display: flex;
  gap: 6px;
`;

const ButtonSet = styled.div`
  flex-shrink: 0;
  display: flex;
`;

const StatusBar = styled.div`
  flex-shrink: 0;
  height: 32px;
  padding-left: 179px;
  line-height: 32px;
  border-top: 1px solid #fff;
  border-bottom: 1px solid #aca899;
`;

const Main = styled.main`
  flex: 1;
  min-height: 0;
  display: flex;
`;

const SideBar = styled.aside`
  flex-shrink: 0;
  width: 36px;
  background-color: #f0f0ea;
  border-right: 2px solid #9d9b90;
  overflow: hidden;
`;

const SideGrip = styled.div`
  height: 15px;
  background: #ece9d8 repeating-linear-gradient(90deg, #aca899 0 2px, transparent 2px 3px) 0 8px / 29px 2px no-repeat;
`;

const SideGroup = styled.div`
  padding-bottom: 3px;
  background-color: #ece9d8;
  border-bottom: 1px solid #aca899;

  & + & {
    padding-top: 4px;
  }
`;

const SideItem = styled.div`
  display: flex;
  margin-left: -7px;

  ${DropButton} {
    margin-left: 2px;
  }
`;

const Panel = styled.section`
  flex-shrink: 0;
  width: 297px;
  display: flex;
  flex-direction: column;
  border-right: 2px solid #aca899;
`;

const PanelHeader = styled.header`
  height: 19px;
  display: flex;
  align-items: center;
  gap: 6px;
  padding: 0 4px 0 3px;
  background-color: #d4d0c8;
`;

const PanelTitle = styled.h1`
  flex: 1;
  margin: 0;
  font-size: 11px;
  line-height: 16px;
`;

const HeaderButton = styled.button`
  width: 15px;
  height: 15px;
  display: flex;
  align-items: center;
  justify-content: center;
  font-family: "Liberation Mono", monospace;
  font-size: 11px;
  ${framed}
`;

const Tabs = styled.div`
  height: 22px;
  display: flex;
  align-items: flex-end;
  gap: 1px;
  border-bottom: 1px solid #919b9c;
`;

const Tab = styled.button`
  height: ${({ $active }) => ($active ? 21 : 19)}px;
  width: ${({ $active }) => ($active ? 61 : 39)}px;
  padding-bottom: ${({ $active }) => ($active ? 2 : 0)}px;
  border: 1px solid #919b9c;
  border-bottom: none;
  border-radius: 3px 3px 0 0;
  background-color: #f9f8f3;
  line-height: 16px;

  ${({ $active }) =>
    $active &&
    css`
      background-color: #fff;
      border-top: 2px solid #ffa01e;
    `}
`;

const PanelTools = styled.div`
  height: 31px;
  display: flex;
  align-items: center;
  margin: 1px 16px 0 1px;
  padding-left: 5px;
  border-top: 1px solid #aca899;

  ${Separator} {
    width: 6px;
  }
`;

const TreeBox = styled.div`
  flex: 1;
  min-height: 0;
  display: flex;
  flex-direction: column;
  margin: 5px 3px 0 3px;
  border: 1px solid #7f9db9;
  border-bottom: none;
  background-color: #fff;
`;

const TreeList = styled.ul`
  flex: 1;
  min-height: 0;
  margin: 0;
  padding: 1px 0 0;
  list-style: none;
  overflow: hidden;
`;

const TreeRow = styled.li`
  height: 16px;
  display: flex;
  align-items: center;
  padding-left: ${({ $level }) => 3 + $level * 19}px;
`;

const Branch = styled.span`
  position: relative;
  flex-shrink: 0;
  width: 19px;
  height: 16px;
  display: flex;
  align-items: center;
  justify-content: center;

  ${({ $line, $last }) =>
    $line &&
    css`
      &::before {
        content: "";
        position: absolute;
        left: 9px;
        top: 0;
        height: ${$last ? 8 : 16}px;
        border-left: 1px dotted #555;
      }

      &::after {
        content: "";
        position: absolute;
        left: 9px;
        right: 0;
        top: 8px;
        border-top: 1px dotted #555;
      }
    `}
`;

const Expander = styled.span`
  position: relative;
  z-index: 1;
  width: 9px;
  height: 9px;
  border: 1px solid #7b9ebd;
  background-color: #f3f2ec;
  font-family: "Liberation Mono", monospace;
  font-size: 10px;
  font-weight: 700;
  line-height: 7px;
  text-align: center;
`;

const TreeText = styled.span`
  flex: ${({ $selected }) => ($selected ? 1 : "none")};
  height: 16px;
  margin-left: 1px;
  padding-left: 2px;
  line-height: 16px;
  white-space: pre;
  ${({ $selected }) =>
    $selected &&
    css`
      color: #fff;
      background-color: #316ac5;
    `}
`;

const ScrollBar = styled.div`
  flex-shrink: 0;
  height: 15px;
  display: flex;
  gap: 2px;
  padding: 1px 1px 0;
  background-color: #f4f3ee;
`;

const ScrollButton = styled.button`
  width: 15px;
  display: flex;
  align-items: center;
  justify-content: center;
  background-color: #c1d3fb;
  border-radius: 2px;
`;

const ScrollThumb = styled.div`
  width: 38%;
  display: flex;
  align-items: center;
  justify-content: center;
  gap: 1px;
  border: 1px solid #98b0e8;
  border-radius: 2px;
  background-color: #c1d3fb;

  i {
    width: 1px;
    height: 6px;
    background-color: #8ca4dc;
  }
`;

const ScrollTrack = styled.div`
  flex: 1;
`;

const Canvas = styled.section`
  position: relative;
  flex: 1;
  min-width: 0;
  background-color: #000099;
  overflow: hidden;
`;

const DrawingSvg = styled.svg`
  width: 100%;
  height: 100%;
`;

const Engraved = styled.text`
  font-family: "Noto Sans CJK SC", sans-serif;
  font-size: 24px;
  font-weight: 300;
  text-anchor: middle;
  fill: #00ff00;
`;

const AxisLabel = styled.text`
  font-family: "Liberation Mono", monospace;
  font-size: 11px;
  font-weight: 700;
`;

const CanvasStatus = styled.div`
  position: absolute;
  left: 8px;
  bottom: 0;
  display: flex;
  gap: 20px;
  font-size: 13px;
  font-weight: 700;
  line-height: 14px;
  color: #c0c0c0;
`;

const Watermark = styled.div`
  position: absolute;
  right: 18px;
  bottom: 4px;
  display: flex;
  align-items: center;
  gap: 3px;
  font-family: "DejaVu Sans", "Noto Sans CJK SC", sans-serif;
  font-size: 15px;
  font-weight: 700;
  line-height: 18px;
  color: #fff;
  -webkit-text-stroke: 2px #e83030;
  paint-order: stroke fill;

  strong {
    font-size: 18px;
  }
`;

export default App;
